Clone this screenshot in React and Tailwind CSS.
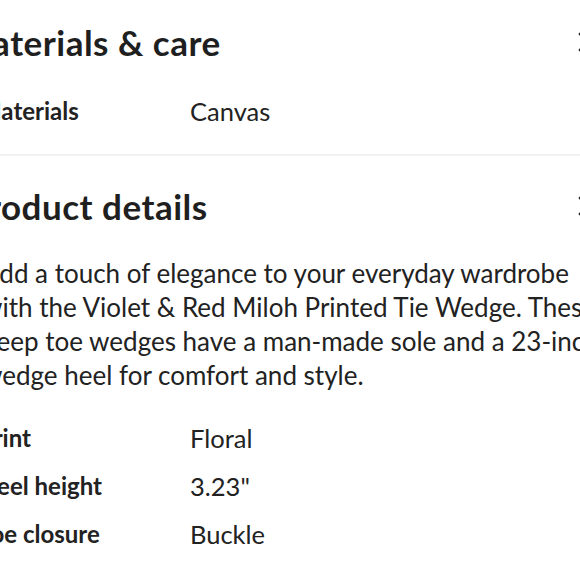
const materials = [{ label: 'Materials', value: 'Canvas' }];

const details = [
  { label: 'Print', value: 'Floral' },
  { label: 'Heel height', value: '3.23"' },
  { label: 'Toe closure', value: 'Buckle' },
];

const description = [
  'Add a touch of elegance to your everyday wardrobe',
  'with the Violet & Red Miloh Printed Tie Wedge. These',
  'peep toe wedges have a man-made sole and a 23-inch',
  'wedge heel for comfort and style.',
];

function CloseIcon() {
  return (
    <svg width="22" height="22" viewBox="0 0 22 22" className="shrink-0 text-[#1f1f1f]">
      <path d="M3 3L19 19M3 19L19 3" stroke="currentColor" strokeWidth="2.6" strokeLinecap="round" />
    </svg>
  );
}

function Row({ label, value }) {
  return (
    <div className="flex h-[48px] items-center text-[#222]">
      <div className="-ml-[3px] w-[211px] shrink-0 text-[24px] font-bold">{label}</div>
      <div className="text-[25.5px]">{value}</div>
    </div>
  );
}

// titles sit a little further left than the body copy in the source
function SectionHeader({ title, shift }) {
  return (
    <div className="-mt-[2px] flex h-[56px] items-center justify-between">
      <h2 className={`${shift} text-[35px] font-bold tracking-[0.5px] text-[#1f1f1f]`}>{title}</h2>
      <CloseIcon />
    </div>
  );
}

export default function App() {
  return (
    <div className="h-[580px] w-[580px] overflow-hidden bg-white" style={{ fontFamily: 'Lato, "Open Sans", sans-serif' }}>
      <div className="-ml-[18px] w-[617px]">
        <section className="pt-[16px] pb-[19px]">
          <SectionHeader title="Materials & care" shift="-ml-[23px]" />
          <div className="mt-[17px]">
            {materials.map((r) => (
              <Row key={r.label} {...r} />
            ))}
          </div>
        </section>

        <div className="h-[2px] bg-[#f2f2f2]" />

        <section className="pt-[24px]">
          <SectionHeader title="Product details" shift="-ml-[16px]" />
          <div className="mt-[22px] text-[26px] leading-[34px] text-[#222]">
            {description.map((line) => (
              <div key={line} className="whitespace-nowrap">{line}</div>
            ))}
          </div>
          <div className="mt-[22px]">
            {details.map((r) => (
              <Row key={r.label} {...r} />
            ))}
          </div>
        </section>
      </div>
    </div>
  );
}
